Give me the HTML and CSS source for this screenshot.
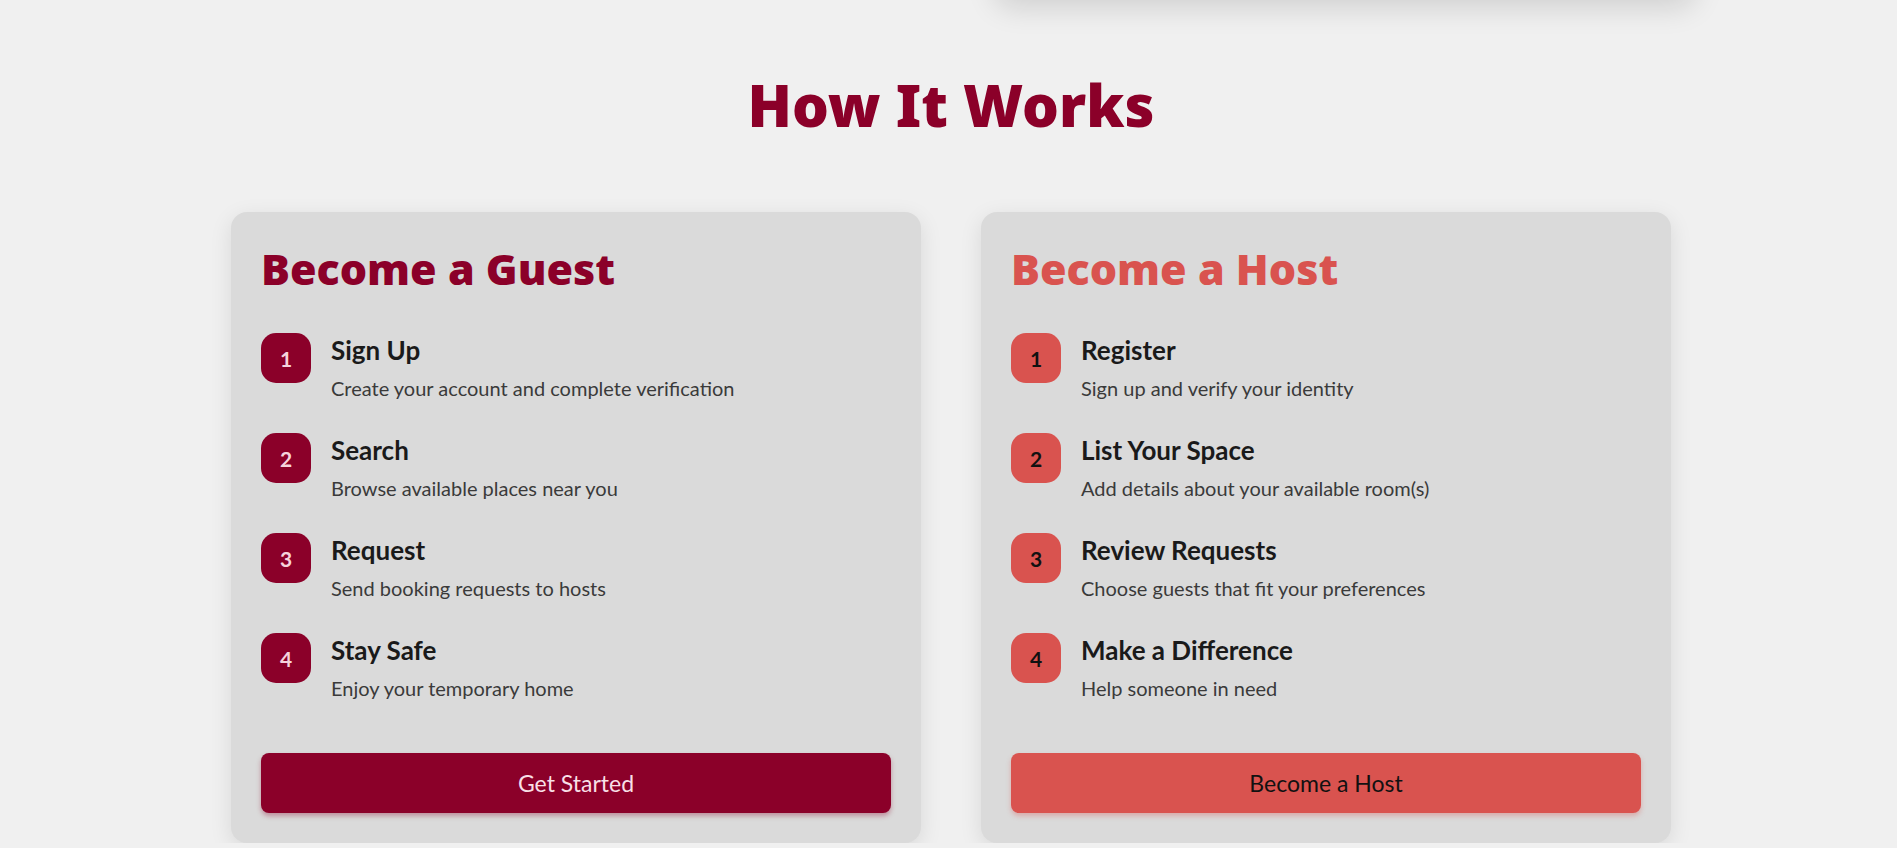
FILE: index.html
```html
<!DOCTYPE html>
<html lang="en">
<head>
<meta charset="utf-8">
<title>How It Works</title>
<link rel="stylesheet" href="styles.css">
</head>
<body>
  <div class="hero-media"></div>
  <section class="how">
    <h2 class="how-title">How It Works</h2>
    <div class="how-grid">
      <div class="how-card guest">
        <h3 class="card-title">Become a Guest</h3>
        <ol class="steps">
          <li class="step"><span class="badge">1</span><div class="step-text"><h4>Sign Up</h4><p>Create your account and complete verification</p></div></li>
          <li class="step"><span class="badge">2</span><div class="step-text"><h4>Search</h4><p>Browse available places near you</p></div></li>
          <li class="step"><span class="badge">3</span><div class="step-text"><h4>Request</h4><p>Send booking requests to hosts</p></div></li>
          <li class="step"><span class="badge">4</span><div class="step-text"><h4>Stay Safe</h4><p>Enjoy your temporary home</p></div></li>
        </ol>
        <button class="cta">Get Started</button>
      </div>
      <div class="how-card host">
        <h3 class="card-title">Become a Host</h3>
        <ol class="steps">
          <li class="step"><span class="badge">1</span><div class="step-text"><h4>Register</h4><p>Sign up and verify your identity</p></div></li>
          <li class="step"><span class="badge">2</span><div class="step-text"><h4>List Your Space</h4><p>Add details about your available room(s)</p></div></li>
          <li class="step"><span class="badge">3</span><div class="step-text"><h4>Review Requests</h4><p>Choose guests that fit your preferences</p></div></li>
          <li class="step"><span class="badge">4</span><div class="step-text"><h4>Make a Difference</h4><p>Help someone in need</p></div></li>
        </ol>
        <button class="cta">Become a Host</button>
      </div>
    </div>
  </section>
</body>
</html>
```

FILE: styles.css
```css
* { box-sizing: border-box; }
html, body { margin: 0; padding: 0; }
body {
  background: #f0f0f0;
  font-family: Lato, "Open Sans", sans-serif;
  color: #1a1a1a;
  overflow: hidden;
}
.hero-media {
  width: 700px;
  height: 200px;
  margin: -203px 0 0 995px;
  background: #f0f0f0;
  border-radius: 16px;
  box-shadow: 0 10px 30px rgba(0, 0, 0, 0.14);
}
.how {
  padding: 72px 0 0;
}
.how-title {
  margin: 0 0 71px;
  text-align: center;
  padding-left: 5px;
  font-family: "Noto Sans", Lato, sans-serif;
  font-size: 58px;
  line-height: 72px;
  font-weight: 900;
  color: #8b0029;
}
.how-grid {
  width: 1440px;
  margin-left: 231px;
  display: grid;
  grid-template-columns: 1fr 1fr;
  gap: 60px;
}
.how-card {
  background: #dadada;
  border-radius: 16px;
  padding: 30px 30px 30px;
  box-shadow: 0 6px 22px rgba(0, 0, 0, 0.1);
}
.card-title {
  margin: 0 0 37px;
  font-family: "Noto Sans", Lato, sans-serif;
  font-size: 43px;
  line-height: 54px;
  font-weight: 900;
}
.guest .card-title { color: #8b0029; }
.host .card-title { color: #d9534f; }
.steps {
  list-style: none;
  margin: 0 0 50px;
  padding: 0;
  display: flex;
  flex-direction: column;
  gap: 30px;
}
.step {
  display: flex;
  align-items: flex-start;
  gap: 20px;
}
.badge {
  flex: none;
  width: 50px;
  height: 50px;
  border-radius: 15px;
  display: flex;
  align-items: center;
  justify-content: center;
  font-size: 21px;
  font-weight: 700;
}
.guest .badge { background: #8b0029; color: #f6d3dc; }
.host .badge { background: #d9534f; color: #111; }
.step-text { padding-top: 2px; }
.step-text h4 {
  margin: 0 0 7px;
  font-size: 26px;
  line-height: 31px;
  font-weight: 700;
  color: #1a1a1a;
}
.step-text p {
  margin: 0;
  font-size: 20px;
  line-height: 30px;
  color: #3a3a3a;
}
.cta {
  display: block;
  width: 100%;
  height: 60px;
  border: 0;
  border-radius: 8px;
  font-family: inherit;
  font-size: 23px;
  font-weight: 400;
  cursor: pointer;
}
.guest .cta { background: #8b0029; color: #f8dfe6; box-shadow: 0 3px 5px rgba(139, 0, 41, 0.35); }
.host .cta { background: #d9534f; color: #111; box-shadow: 0 3px 5px rgba(217, 83, 79, 0.35); }
```
